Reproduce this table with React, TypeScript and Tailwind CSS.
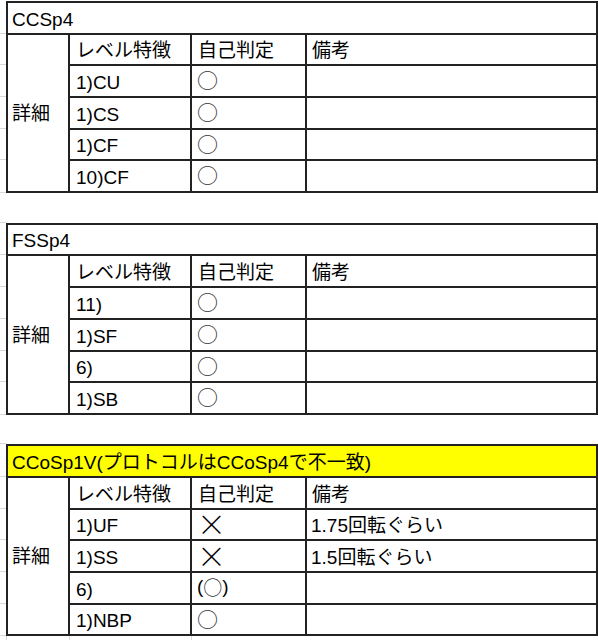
import type { ReactNode } from 'react';

type Row = { level: string; mark: 'o' | 'x' | '(o)'; note?: string };

type Sheet = {
  title: string;
  highlight?: boolean;
  rowsClass: string;
  strip: string[];
  rows: Row[];
};

const sheets: Sheet[] = [
  {
    title: 'CCSp4',
    rowsClass: 'grid-rows-[30px_29px_30px_30px_29px_30px]',
    strip: ['h-[33px]', 'h-[31px]', 'h-[32px]', 'h-[32px]', 'h-[31px]', 'h-[33px]'],
    rows: [
      { level: '1)CU', mark: 'o' },
      { level: '1)CS', mark: 'o' },
      { level: '1)CF', mark: 'o' },
      { level: '10)CF', mark: 'o' },
    ],
  },
  {
    title: 'FSSp4',
    rowsClass: 'grid-rows-[29px_30px_30px_30px_29px_30px]',
    strip: ['h-[32px]', 'h-[32px]', 'h-[32px]', 'h-[32px]', 'h-[31px]', 'h-[33px]'],
    rows: [
      { level: '11)', mark: 'o' },
      { level: '1)SF', mark: 'o' },
      { level: '6)', mark: 'o' },
      { level: '1)SB', mark: 'o' },
    ],
  },
  {
    title: 'CCoSp1V(プロトコルはCCoSp4で不一致)',
    highlight: true,
    rowsClass: 'grid-rows-[30px_30px_29px_30px_30px_29px]',
    strip: ['h-[33px]', 'h-[32px]', 'h-[31px]', 'h-[32px]', 'h-[32px]', 'h-[32px]'],
    rows: [
      { level: '1)UF', mark: 'x', note: '1.75回転ぐらい' },
      { level: '1)SS', mark: 'x', note: '1.5回転ぐらい' },
      { level: '6)', mark: '(o)' },
      { level: '1)NBP', mark: 'o' },
    ],
  },
];

// spreadsheet cell: bottom-aligned by default, like the sheet app does
const Cell = ({
  children,
  className = '',
  bg = 'bg-white',
  align = 'items-end pb-[2px]',
}: {
  children?: ReactNode;
  className?: string;
  bg?: string;
  align?: string;
}) => (
  <div className={`flex ${align} ${bg} leading-[22px] whitespace-nowrap ${className}`}>{children}</div>
);

const Circle = ({ size = 'text-[21px]' }: { size?: string }) => (
  <span className={`font-['Noto_Sans_CJK_JP',sans-serif] ${size} leading-none text-[#333]`}>○</span>
);

const Mark = ({ mark }: { mark: Row['mark'] }) => {
  if (mark === 'x') {
    return <span className="font-['Noto_Sans_CJK_JP',sans-serif] text-[29px] leading-[20px] font-extralight">×</span>;
  }
  if (mark === '(o)') {
    return (
      <span className="flex items-center leading-none">
        (<Circle size="text-[19px]" />)
      </span>
    );
  }
  return <Circle />;
};

const Strip = ({ items }: { items: string[] }) => (
  <div className="flex w-[6px] shrink-0 flex-col">
    {items.map((h, i) => (
      <div key={i} className={`${h} shrink-0 border-b border-[#d9d9d9]`} />
    ))}
  </div>
);

const SheetBlock = ({ sheet }: { sheet: Sheet }) => (
  <div className="flex">
    <Strip items={sheet.strip} />
    <div className={`grid flex-1 grid-cols-[60px_120px_113px_1fr] ${sheet.rowsClass} gap-[2px] bg-[#222] p-[2px]`}>
      <Cell className="col-span-4 pl-[4px]" bg={sheet.highlight ? 'bg-[#ffff00]' : 'bg-white'}>
        {sheet.title}
      </Cell>
      <Cell className="row-span-5 pl-[4px]" align="items-center pt-[2px]">
        詳細
      </Cell>
      <Cell className="pl-[6px]">レベル特徴</Cell>
      <Cell className="pl-[6px]">自己判定</Cell>
      <Cell className="pl-[5px]">備考</Cell>
      {sheet.rows.map((r) => (
        <div key={r.level + r.mark} className="contents">
          <Cell className="pl-[6px]">{r.level}</Cell>
          <Cell className="pl-[5px]" align="items-center pb-[3px]">
            <Mark mark={r.mark} />
          </Cell>
          <Cell className="pl-[4px]">{r.note}</Cell>
        </div>
      ))}
    </div>
  </div>
);

const Gap = ({ h }: { h: string }) => (
  <div className={`flex ${h}`}>
    <div className="w-[6px] border-b border-[#d9d9d9]" />
    <div className="flex-1 bg-white" />
  </div>
);

export default function App() {
  return (
    <div className="h-[640px] w-[598px] overflow-hidden bg-white pt-px font-['Liberation_Sans','Noto_Sans_CJK_JP',sans-serif] text-[19px] text-black">
      <SheetBlock sheet={sheets[0]} />
      <Gap h="h-[30px]" />
      <SheetBlock sheet={sheets[1]} />
      <Gap h="h-[29px]" />
      <SheetBlock sheet={sheets[2]} />
      <div className="flex h-[4px]">
        <div className="w-[6px]" />
        <div className="w-[63px] border-l border-[#d9d9d9]" />
        <div className="w-[122px] border-l border-[#d9d9d9]" />
        <div className="w-[115px] border-l border-[#d9d9d9]" />
        <div className="flex-1" />
      </div>
    </div>
  );
}
